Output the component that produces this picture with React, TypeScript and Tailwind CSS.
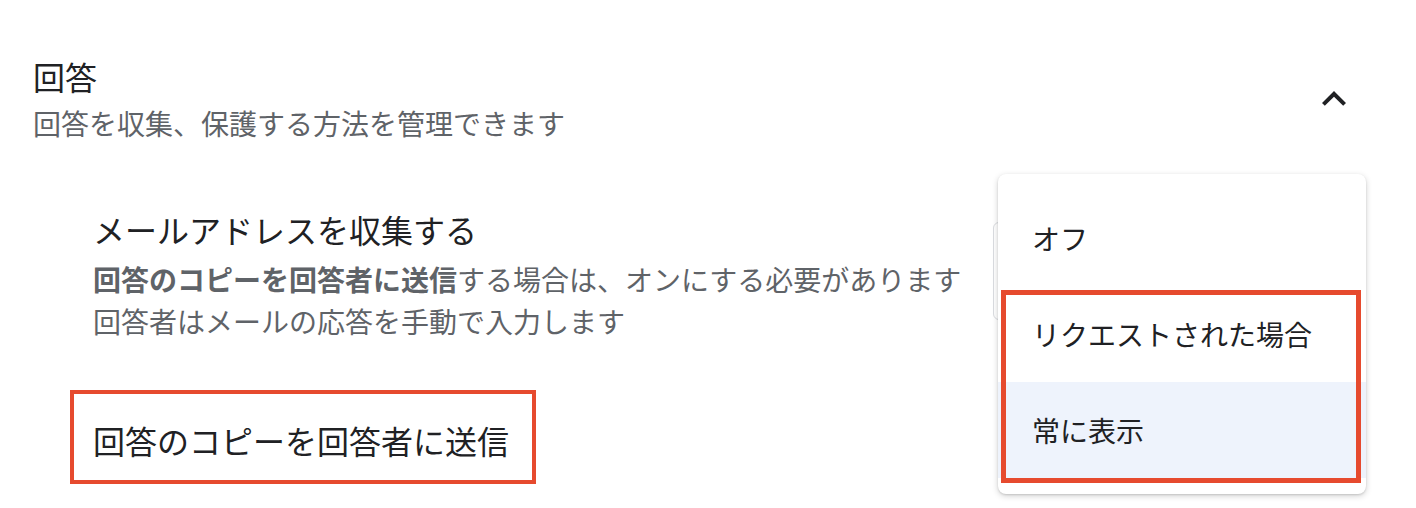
import React from 'react'

const font = "font-['Noto_Sans_CJK_JP','Noto_Sans',sans-serif]"

function ChevronUp() {
  return (
    <svg width="48" height="48" viewBox="0 0 24 24" fill="#202124">
      <path d="M12 8l-6 6 1.41 1.41L12 10.83l4.59 4.58L18 14z" />
    </svg>
  )
}

export default function App() {
  const options = ['オフ', 'リクエストされた場合', '常に表示']

  return (
    <div className={`relative w-[1416px] h-[508px] overflow-hidden bg-white text-[#202124] ${font}`}>
      {/* Section header */}
      <div className="flex items-center justify-between pt-[54px] pl-[33px] pr-[58px]">
        <div>
          <div className="text-[32px] leading-[44px]">回答</div>
          <div className="mt-[5px] text-[28px] leading-[40px] text-[#5f6368]">
            回答を収集、保護する方法を管理できます
          </div>
        </div>
        <ChevronUp />
      </div>

      {/* Collect emails */}
      <div className="mt-[64px] flex items-start justify-between pl-[93px] pr-[80px]">
        <div>
          <div className="text-[32px] leading-[44px]">メールアドレスを収集する</div>
          <div className="mt-[7px] text-[28px] leading-[42px] text-[#5f6368]">
            <span className="font-bold">回答のコピーを回答者に送信</span>
            する場合は、オンにする必要があります
          </div>
          <div className="text-[28px] leading-[42px] text-[#5f6368]">
            回答者はメールの応答を手動で入力します
          </div>
        </div>
        <div className="mt-[15px] h-[98px] w-[343px] rounded-md border border-[#dadce0]" />
      </div>

      {/* Send copy */}
      <div className="mt-[48px] pl-[70px]">
        <div className="w-[466px] h-[94px] border-4 border-[#e64a2e] px-[19px] flex items-center">
          <span className="text-[32px] leading-[44px] mt-[6px]">回答のコピーを回答者に送信</span>
        </div>
      </div>

      {/* Dropdown menu */}
      <div className="absolute left-[998px] top-[174px] w-[368px] h-[320px] rounded-lg bg-white py-[16px] shadow-[0_2px_6px_rgba(0,0,0,0.18),0_1px_2px_rgba(0,0,0,0.12)]">
        {options.map((o, i) => (
          <div
            key={o}
            className={`h-[96px] flex items-center px-[34px] text-[28px] ${i === 2 ? 'bg-[#eef3fc]' : ''}`}
          >
            {o}
          </div>
        ))}
      </div>
      <div className="absolute left-[1001px] top-[290px] w-[360px] h-[193px] border-[5px] border-[#e64a2e]" />
    </div>
  )
}
